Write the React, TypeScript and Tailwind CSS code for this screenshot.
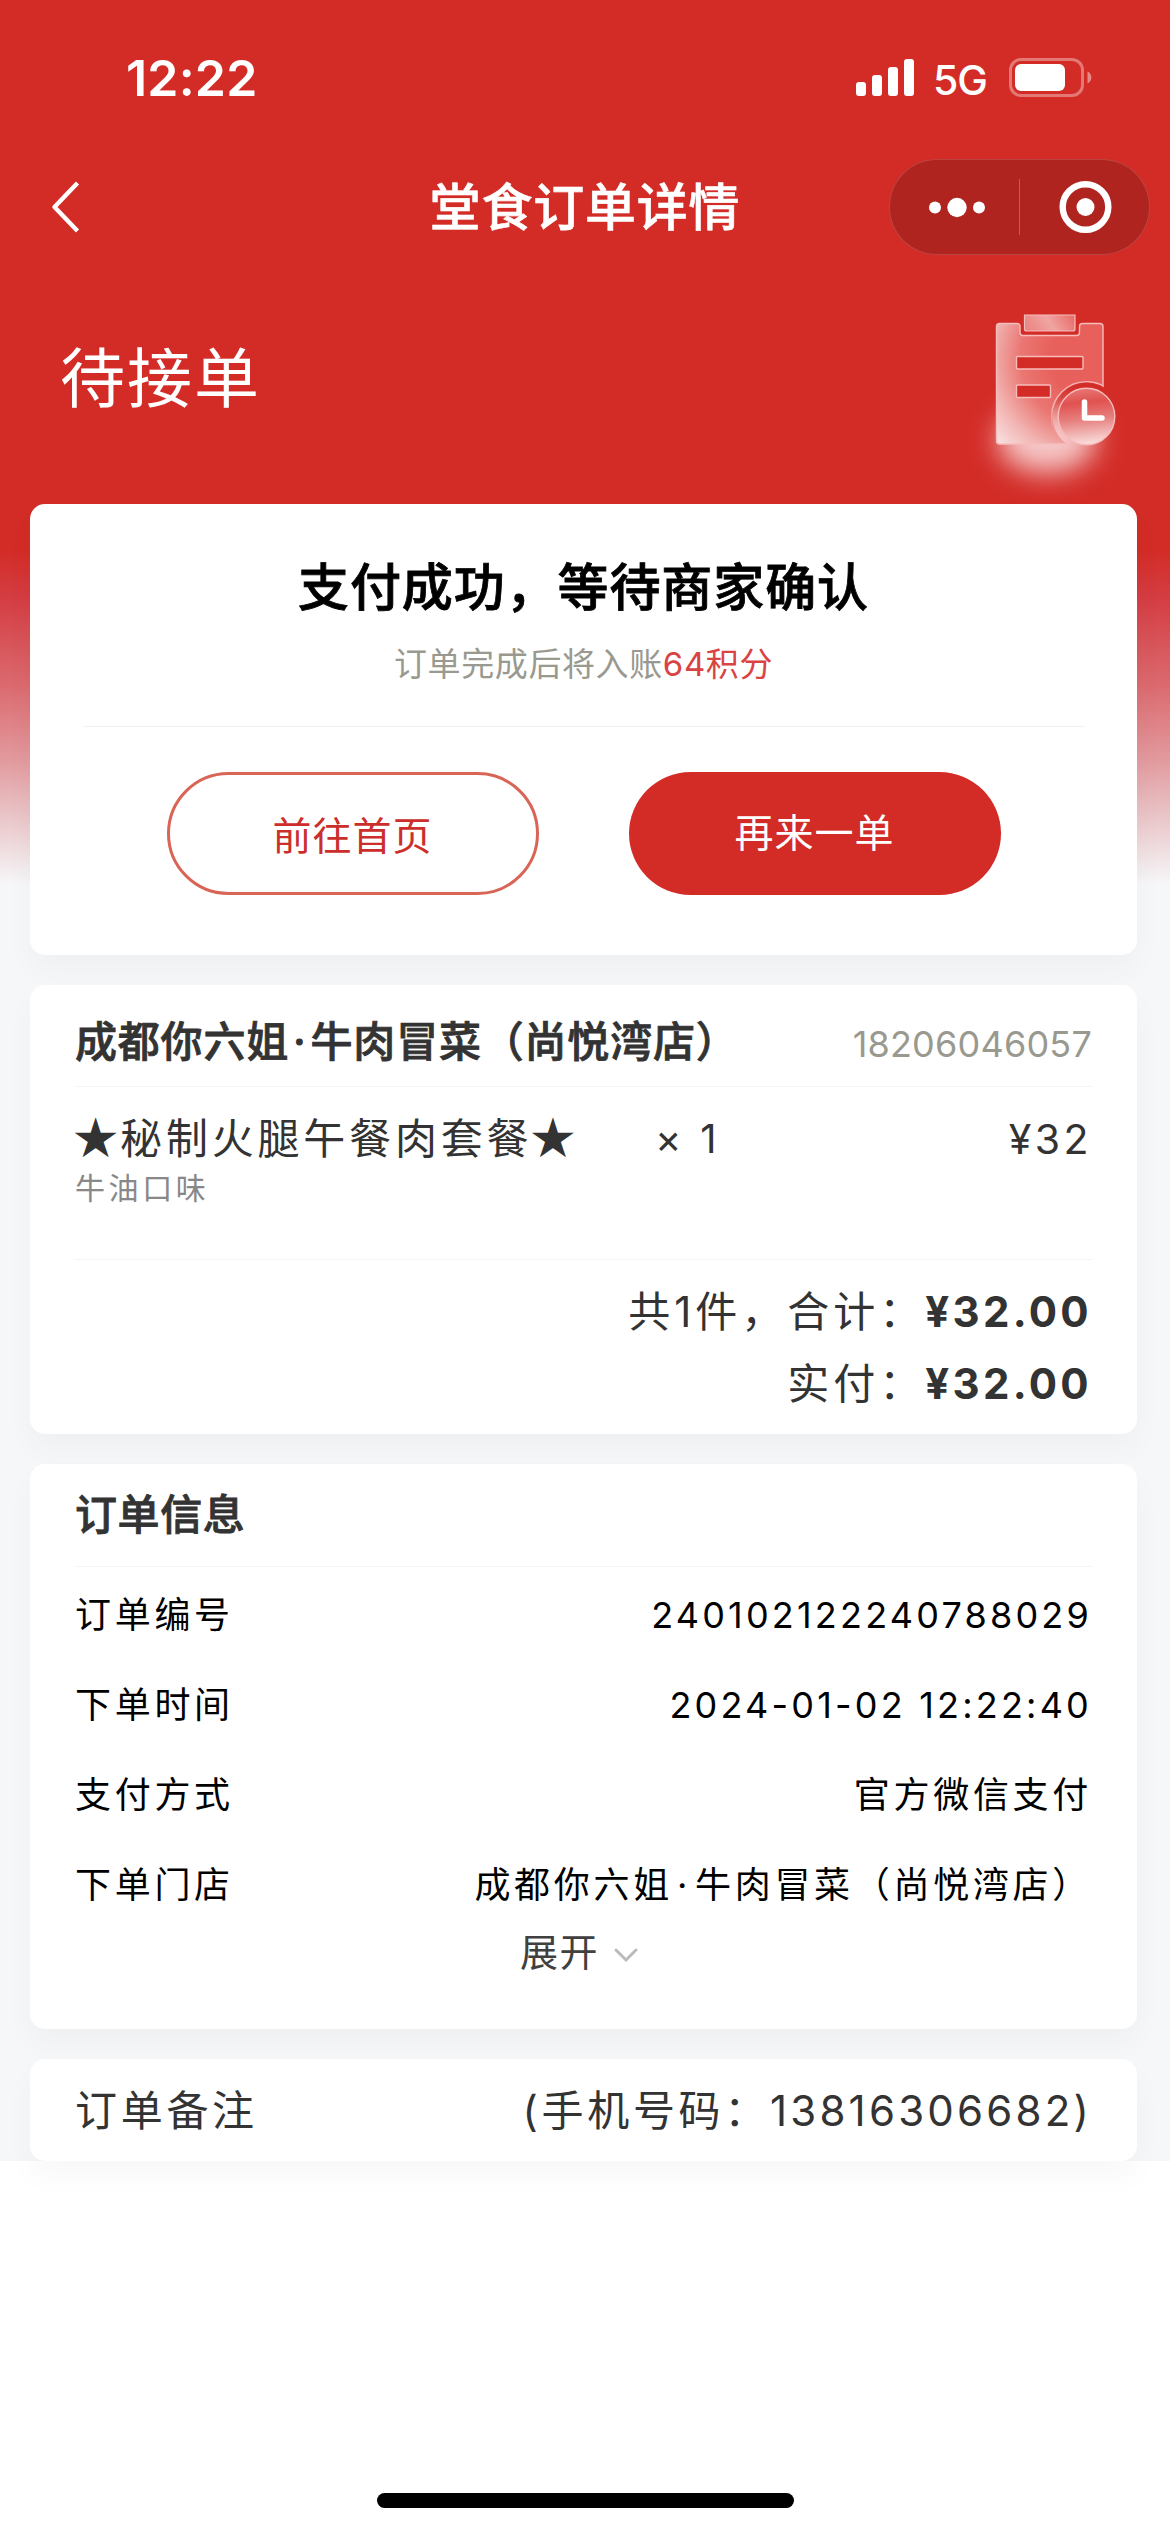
import type { ReactNode } from 'react';

interface InfoRow {
  label: string;
  value: ReactNode;
  numeric?: boolean;
}

const ORDER_INFO: InfoRow[] = [
  { label: '订单编号', value: '240102122240788029', numeric: true },
  { label: '下单时间', value: '2024-01-02 12:22:40', numeric: true },
  { label: '支付方式', value: '官方微信支付' },
  { label: '下单门店', value: <StoreName /> },
];

function StoreName() {
  return (
    <>
      成都你六姐<span className="mx-[4px]">·</span>牛肉冒菜（尚悦湾店）
    </>
  );
}

function Star() {
  return <span className="text-[39.5px] [-webkit-text-stroke:2.5px_currentColor]">★</span>;
}

function StatusBar() {
  return (
    <div className="flex h-[141px] items-start justify-between pl-[126px] pr-[78px] pt-[46px] text-white">
      <span className="text-[50px] font-semibold leading-[64px] tracking-[0.2px]">12:22</span>
      <div className="flex h-[64px] items-center">
        <svg className="h-[38px] w-[58px]" viewBox="0 0 58 38" fill="currentColor">
          <rect x="0" y="23" width="10" height="14" rx="3" />
          <rect x="16" y="16" width="10" height="21" rx="3" />
          <rect x="32" y="8" width="10" height="29" rx="3" />
          <rect x="48" y="0" width="10" height="37" rx="3" />
        </svg>
        <span className="ml-[19px] mt-[3px] w-[57px] text-[41px] font-medium leading-[48px] tracking-[-1px]">5G</span>
        <svg className="ml-[19px] h-[40px] w-[83px]" viewBox="0 0 83 40">
          <rect x="1.5" y="1.5" width="72" height="36" rx="10.5" fill="none" stroke="#fff" strokeOpacity="0.36" strokeWidth="3" />
          <rect x="6" y="6" width="50" height="27" rx="6" fill="#fff" />
          <path d="M78.5 13.5c2.4 1 3.8 3.4 3.8 6s-1.4 5-3.8 6z" fill="#fff" fillOpacity="0.45" />
        </svg>
      </div>
    </div>
  );
}

function NavBar() {
  return (
    <div className="grid h-[132px] grid-cols-[1fr_312px_1fr] items-center text-white">
      <svg className="ml-[50px] h-[54px] w-[32px]" viewBox="0 0 32 54" fill="none" stroke="currentColor" strokeWidth="4.4">
        <path d="M27.5 3 4.5 27l23 24" strokeLinejoin="round" />
      </svg>
      <h1 className="mt-[2px] whitespace-nowrap text-center text-[51px] font-medium leading-[60px] tracking-[0.8px] [-webkit-text-stroke:0.6px_currentColor]">
        堂食订单详情
      </h1>
      <div className="mr-[20px] flex h-[96px] w-[261px] items-center justify-self-end rounded-full border border-white/15 bg-[#b02420]">
        <svg className="h-[94px] w-[129px]" viewBox="0 0 129 94" fill="currentColor">
          <circle cx="45" cy="47.5" r="6" />
          <circle cx="67" cy="47.5" r="9.7" />
          <circle cx="89" cy="47.5" r="6" />
        </svg>
        <span className="h-[56px] w-px bg-white/25" />
        <svg className="h-[94px] w-[129px]" viewBox="0 0 129 94">
          <circle cx="65.5" cy="47" r="22.8" fill="none" stroke="currentColor" strokeWidth="6.4" />
          <circle cx="65.5" cy="47" r="9" fill="currentColor" />
        </svg>
      </div>
    </div>
  );
}

function PendingOrderIcon() {
  return (
    <svg className="h-[204px] w-[180px]" viewBox="960 300 180 204" fill="none">
      <defs>
        <radialGradient id="sheet" gradientUnits="userSpaceOnUse" cx="1088" cy="358" r="122">
          <stop offset="0.3" stopColor="#e8605b" />
          <stop offset="0.55" stopColor="#ea7672" />
          <stop offset="0.8" stopColor="#f2b5b3" />
          <stop offset="1" stopColor="#f8dedd" />
        </radialGradient>
        <linearGradient id="clip" x1="0" y1="0.6" x2="1" y2="0.4">
          <stop offset="0" stopColor="#ea8582" />
          <stop offset="0.5" stopColor="#f0a5a3" />
          <stop offset="1" stopColor="#e8716d" />
        </linearGradient>
        <linearGradient id="clock" x1="0.4" y1="0" x2="0.5" y2="1">
          <stop offset="0" stopColor="#e67876" />
          <stop offset="0.25" stopColor="#e05250" />
          <stop offset="0.55" stopColor="#e67f7e" />
          <stop offset="1" stopColor="#f9e0df" />
        </linearGradient>
        <linearGradient id="ring" x1="0" y1="0" x2="0" y2="1">
          <stop offset="0.4" stopColor="#f3b0b0" />
          <stop offset="0.8" stopColor="#f3b0b0" stopOpacity="0" />
        </linearGradient>
        <filter id="glow" x="-60%" y="-80%" width="220%" height="260%">
          <feGaussianBlur stdDeviation="14" />
        </filter>
        <clipPath id="sheetClip">
          <rect x="996" y="323" width="107.5" height="121" />
        </clipPath>
        <mask id="bite" maskUnits="userSpaceOnUse" x="960" y="300" width="180" height="204">
          <rect x="960" y="300" width="180" height="204" fill="#fff" />
          <circle cx="1086.5" cy="416.5" r="34" fill="#000" />
        </mask>
      </defs>
      <ellipse cx="1047" cy="440" rx="49" ry="33" fill="#f6c8c8" filter="url(#glow)" />
      <g mask="url(#bite)">
        <path
          d="M999.5 323.5h17.5q3 0 3 3v6q0 3 3 3h53.5q3 0 3-3v-6q0-3 3-3h17.5q3 0 3 3v117.5h-103.500q-3 0-3-3v-114.5q0-3 3-3z"
          fill="url(#sheet)"
          stroke="#f5bdbd"
          strokeWidth="1.4"
        />
        <circle cx="1086.5" cy="416.5" r="34.8" stroke="url(#ring)" strokeWidth="1.6" clipPath="url(#sheetClip)" />
      </g>
      <path d="M1024.5 315v14q0 2 2 2h46.5q2 0 2-2v-14z" fill="url(#clip)" stroke="#f5bdbd" strokeWidth="1.2" />
      <rect x="1016.5" y="356.5" width="66.5" height="12.5" rx="1" fill="#d32c27" stroke="#f7bcbc" strokeWidth="1.4" />
      <rect x="1016.5" y="385" width="34" height="12.5" rx="1" fill="#d32c27" stroke="#f7bcbc" strokeWidth="1.4" />
      <circle cx="1086.5" cy="416.5" r="28.3" fill="url(#clock)" stroke="#f5bdbd" strokeWidth="1.4" />
      <path d="M1084.5 402v16h17.5" stroke="#fff" strokeWidth="5.5" strokeLinecap="round" strokeLinejoin="round" />
    </svg>
  );
}

function Card({ className, children }: { className: string; children: ReactNode }) {
  return (
    <section className={`rounded-[15px] bg-white shadow-[0_15px_30px_rgba(0,0,0,0.03)] ${className}`}>
      {children}
    </section>
  );
}

function PaymentCard() {
  return (
    <Card className="flex h-[451px] flex-col items-center">
      <h2 className="mt-[52px] whitespace-nowrap text-[51px] font-medium leading-[64px] tracking-[0.9px] text-black [-webkit-text-stroke:0.8px_currentColor]">
        支付成功，等待商家确认
      </h2>
      <p className="mt-[20px] text-[33px] leading-[48px] tracking-[0.6px] text-[#999990]">
        订单完成后将入账<span className="text-[#d94343]">64积分</span>
      </p>
      <div className="mt-[38px] h-px w-[1002px] bg-[#f2f2f2]" />
      <div className="mt-[45px] flex gap-[90px]">
        <button className="h-[123px] w-[372px] rounded-full border-[3px] border-[#d96557] pt-[6px] text-[39px] tracking-[1px] text-[#cc2f2b]">
          前往首页
        </button>
        <button className="h-[123px] w-[372px] rounded-full bg-[#d32c27] text-[39px] tracking-[1px] text-white">
          再来一单
        </button>
      </div>
    </Card>
  );
}

function ItemsCard() {
  return (
    <Card className="h-[449px] px-[45px] text-[#333]">
      <div className="flex h-[102px] items-center justify-between border-b border-[#f4f4f4] pt-[13px]">
        <h3 className="whitespace-nowrap text-[42px] font-medium leading-[60px] tracking-[0.8px] [-webkit-text-stroke:0.8px_currentColor]">
          <StoreName />
        </h3>
        <span className="mt-[3px] text-[36px] leading-[48px] tracking-[0.2px] text-[#999990]">18206046057</span>
      </div>
      <div className="mt-[25px] flex h-[54px] items-center text-[42px] leading-[54px] tracking-[3.8px]">
        <span className="w-[580px] whitespace-nowrap">
          <Star />
          秘制火腿午餐肉套餐
          <Star />
        </span>
        <span className="text-[40px]">× 1</span>
        <span className="ml-auto text-[41px] tracking-[3.5px]">¥32</span>
      </div>
      <p className="mt-px h-[42px] text-[30px] leading-[42px] tracking-[3.6px] text-[#888]">牛油口味</p>
      <div className="mt-[50px] h-px bg-[#f4f4f4]" />
      <div className="flex h-[172px] flex-col items-end pt-[16px] text-[42px] leading-[72px] tracking-[4px]">
        <p className="whitespace-nowrap">
          共1件，合计：<b className="font-bold tracking-[3.3px]">¥32.00</b>
        </p>
        <p className="whitespace-nowrap">
          实付：<b className="font-bold tracking-[3.3px]">¥32.00</b>
        </p>
      </div>
    </Card>
  );
}

function OrderInfoCard() {
  return (
    <Card className="h-[565px] px-[45px]">
      <h3 className="h-[103px] border-b border-[#f4f4f4] text-[42px] font-medium leading-[102px] tracking-[0.6px] text-[#333] [-webkit-text-stroke:0.8px_currentColor]">
        订单信息
      </h3>
      <dl className="pt-[3px] text-[36px] tracking-[3.7px] text-black">
        {ORDER_INFO.map((row) => (
          <div key={row.label} className="flex h-[90px] items-center justify-between whitespace-nowrap">
            <dt>{row.label}</dt>
            <dd className={row.numeric ? 'tracking-[3.2px]' : ''}>{row.value}</dd>
          </div>
        ))}
      </dl>
      <div className="-mt-px flex h-[46px] items-center pl-[445px] text-[38px] leading-[46px] tracking-[1.4px] text-[#404040]">
        <span>展开</span>
        <svg className="ml-[14px] mt-[6px] h-[16px] w-[26px]" viewBox="0 0 26 16" fill="none" stroke="#bbb" strokeWidth="3">
          <path d="M3 3l10 10L23 3" strokeLinecap="round" />
        </svg>
      </div>
    </Card>
  );
}

function RemarkCard() {
  return (
    <Card className="flex h-[102px] items-center justify-between whitespace-nowrap px-[45px] text-[42px] tracking-[3.7px] text-[#333]">
      <span>订单备注</span>
      <span>
        (手机号码：<span className="tracking-[3.2px]">13816306682)</span>
      </span>
    </Card>
  );
}

export default function App() {
  return (
    <div className="flex h-[2532px] w-[1170px] flex-col bg-white font-['Inter','Noto_Sans_CJK_SC',sans-serif]">
      <main className="h-[2161px] bg-[#f6f7f9] bg-[linear-gradient(180deg,#d32c27_0px,#d32c27_550px,#d43e43_600px,#db6b70_687px,#e29a9e_760px,#e9c4c7_815px,#f6f7f9_885px)]">
        <StatusBar />
        <NavBar />
        <div className="flex h-[231px] items-start justify-between pl-[60px] pr-[30px] text-white">
          <p className="mt-[66px] text-[65px] leading-[80px] tracking-[2px]">待接单</p>
          <div className="mt-[27px]">
            <PendingOrderIcon />
          </div>
        </div>
        <div className="flex flex-col gap-[30px] pl-[30px] pr-[33px]">
          <PaymentCard />
          <ItemsCard />
          <OrderInfoCard />
          <RemarkCard />
        </div>
      </main>
      <div className="mx-auto mb-[24px] mt-auto h-[15px] w-[417px] rounded-full bg-black" />
    </div>
  );
}
